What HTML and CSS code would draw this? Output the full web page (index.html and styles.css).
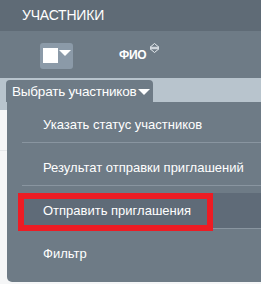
FILE: index.html
```html
<!DOCTYPE html>
<html lang="ru">
<head>
    <meta charset="UTF-8">
    <title>Участники</title>
    <link rel="stylesheet" href="styles.css">
</head>
<body>
    <div class="panel">
        <div class="panel-title">УЧАСТНИКИ</div>
        <div class="table-head">
            <div class="check-button">
                <span class="check-box"></span>
                <span class="caret caret-small"></span>
            </div>
            <div class="column-name">
                ФИО
                <svg class="sort-icon" width="11" height="10" viewBox="0 0 11 10">
                    <path d="M1 4.3 L5.5 0.5 L10 4.3 Z M1 5.7 L5.5 9.5 L10 5.7 Z" fill="none" stroke="#e6ebef" stroke-width="1"/>
                </svg>
            </div>
        </div>
        <div class="table-row"></div>
        <div class="table-row-empty"></div>

        <div class="dropdown">
            <div class="dropdown-toggle">
                Выбрать участников<span class="caret"></span>
            </div>
            <ul class="dropdown-menu">
                <li>Указать статус участников</li>
                <li>Результат отправки приглашений</li>
                <li class="active">
                    Отправить приглашения
                    <span class="marker"></span>
                </li>
                <li>Фильтр</li>
            </ul>
        </div>
    </div>
</body>
</html>
```

FILE: styles.css
```css
html, body {
    margin: 0;
    height: 100%;
    background: #f5f6f7;
    font-family: "Liberation Sans", Arial, sans-serif;
    color: #fff;
}

.panel {
    position: relative;
    height: 100%;
    overflow: hidden;
}

.panel-title {
    height: 31px;
    line-height: 30px;
    padding-left: 22px;
    background: #5f6b76;
    font-size: 14px;
    letter-spacing: -0.2px;
}

.table-head {
    display: flex;
    align-items: center;
    height: 47px;
    background: #6e7b86;
}

.check-button {
    display: flex;
    align-items: center;
    width: 33px;
    height: 26px;
    margin-left: 40px;
    margin-top: 2px;
    border-radius: 3px;
    background: #8b9aa8;
}

.check-box {
    width: 15px;
    height: 15px;
    margin-left: 3px;
    background: #fff;
}

.caret {
    display: inline-block;
    width: 0;
    height: 0;
    border-left: 6px solid transparent;
    border-right: 6px solid transparent;
    border-top: 6px solid #fff;
}

.caret-small {
    margin-left: 1px;
    margin-top: -6px;
}

.column-name {
    display: flex;
    align-items: flex-start;
    margin-left: 46px;
    font-size: 12px;
    font-weight: bold;
    letter-spacing: -0.3px;
}

.sort-icon {
    margin-left: 3px;
    margin-top: -5px;
}

.table-row {
    height: 32px;
    background: #b8c4cd;
}

.table-row-empty {
    height: 40px;
    border-bottom: 1px solid #e6e8ea;
}

.dropdown {
    position: absolute;
    top: 80px;
    left: 6px;
    right: -20px;
}

.dropdown-toggle {
    display: inline-flex;
    align-items: center;
    height: 22px;
    padding: 0 3px 0 6px;
    border-radius: 4px 4px 0 0;
    background: #6e7b86;
    font-size: 13.5px;
    letter-spacing: -0.2px;
}

.dropdown-toggle .caret {
    margin-left: 1px;
    margin-top: 1px;
}

.dropdown-menu {
    margin: 0 0 0 1px;
    padding: 5px 0 11px;
    list-style: none;
    background: #6e7b86;
    border-radius: 0 0 0 5px;
    font-size: 13px;
}

.dropdown-menu li {
    position: relative;
    height: 35px;
    line-height: 35px;
    margin-left: 15px;
    padding-left: 21px;
    border-bottom: 1px solid #8995a0;
}

.dropdown-menu li + li {
    margin-top: 7px;
}

.dropdown-menu li:last-child {
    border-bottom: none;
}

.dropdown-menu li.active {
    background: #5f6b78;
}

.marker {
    position: absolute;
    left: -4px;
    top: 0;
    width: 183px;
    height: 26px;
    border: 6px solid #ed1c24;
}
```
